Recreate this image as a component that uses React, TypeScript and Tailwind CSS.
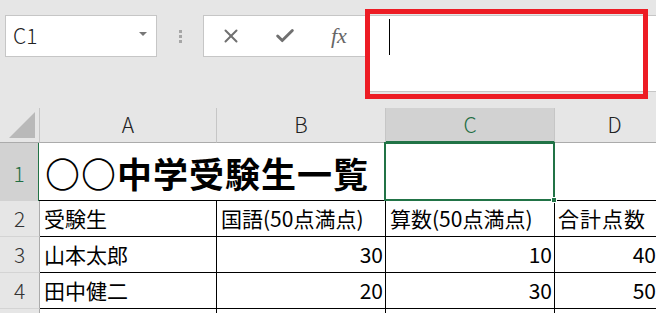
import { Check, X } from "lucide-react";

const jp = "font-['Noto_Sans_CJK_JP','Noto_Sans',sans-serif]";

const rows = [
  { n: "2", a: "受験生", b: "国語(50点満点)", c: "算数(50点満点)", d: "合計点数", num: false },
  { n: "3", a: "山本太郎", b: "30", c: "10", d: "40", num: true },
  { n: "4", a: "田中健二", b: "20", c: "30", d: "50", num: true },
  { n: "", a: "", b: "", c: "", d: "", num: true },
];

const ColHead = ({ label, active, w }: { label: string; active?: boolean; w: string }) => (
  <div
    className={`${w} shrink-0 h-full flex items-center justify-center border-r border-[#c6c6c6] text-[21px] font-light ${
      active ? "bg-[#d2d2d2] text-[#1f6e43] border-b-2 border-b-[#217346]" : "bg-[#e6e6e6] text-[#222] border-b border-b-[#ababab]"
    }`}
  >
    {label}
  </div>
);

export default function App() {
  return (
    <div className={`relative w-[656px] h-[313px] overflow-hidden bg-[#e6e6e6] ${jp}`}>
      {/* formula bar */}
      <div className="h-[108px] flex items-start pt-[15px] pl-[5px]">
        <div className="w-[152px] h-[42px] shrink-0 bg-white border border-[#c6c6c6] flex items-center justify-between pl-[7px] pr-[9px]">
          <span className="text-[21px] font-light text-[#222]">C1</span>
          <span className="w-0 h-0 border-x-[4px] border-x-transparent border-t-[4px] border-t-[#777] -mt-[4px]" />
        </div>
        <div className="w-[46px] h-[42px] shrink-0 flex flex-col items-center justify-center gap-[2px] pl-[1px]">
          <span className="w-[3px] h-[3px] bg-[#a6a6a6]" />
          <span className="w-[3px] h-[3px] bg-[#a6a6a6]" />
          <span className="w-[3px] h-[3px] bg-[#a6a6a6]" />
        </div>
        <div className="w-[164px] h-[42px] shrink-0 bg-white border border-[#c6c6c6] border-r-0 flex items-center pl-[16px] text-[#707070]">
          <X className="w-[22px] h-[22px]" strokeWidth={2.2} />
          <Check className="w-[22px] h-[22px] ml-[32px]" strokeWidth={3.2} />
          <span className="ml-[35px] font-['Liberation_Serif',serif] italic text-[22px] leading-none -mt-[1px] text-[#666]">fx</span>
        </div>
        <div className="flex-1 h-[77px] bg-white border-y border-[#c6c6c6] pl-[22px] pt-[3px]">
          <div className="w-[1px] h-[36px] bg-black" />
        </div>
      </div>
      {/* red highlight */}
      <div className="absolute left-[365px] top-[9px] w-[283px] h-[90px] border-[5px] border-[#ed1c24]" />

      {/* sheet */}
      <div className="flex h-[35px]">
        <div className="w-[40px] shrink-0 h-full relative bg-[#e6e6e6] border-r border-[#c6c6c6] border-b border-b-[#ababab]">
          <div className="absolute right-[4px] bottom-[4px] w-0 h-0 border-l-[26px] border-l-transparent border-b-[26px] border-b-[#b9b9b9]" />
        </div>
        <ColHead label="A" w="w-[177px]" />
        <ColHead label="B" w="w-[169px]" />
        <ColHead label="C" w="w-[169px]" active />
        <ColHead label="D" w="w-[120px]" />
      </div>

      {/* row 1 */}
      <div className="flex h-[58px]">
        <div className="w-[40px] shrink-0 bg-[#d2d2d2] border-r-2 border-[#217346] flex items-center justify-center text-[21px] font-light text-[#1f6e43] pt-[3px]">
          1
        </div>
        <div className="w-[346px] shrink-0 bg-white border-b border-black flex items-center pl-[6px] -ml-[1px] pt-[2px]">
          <span className="text-[35px] font-bold text-black leading-none whitespace-nowrap tracking-[1px]">
            <span className="font-extralight">〇〇</span>中学受験生一覧
          </span>
        </div>
        <div className="w-[169px] shrink-0 bg-white relative border-b border-black">
          <div className="absolute -left-[1px] -top-[1px] -right-[1px] -bottom-[1px] border-2 border-[#217346]" />
          <div className="absolute -right-[3px] -bottom-[3px] w-[6px] h-[6px] bg-[#217346] border border-white" />
        </div>
        <div className="w-[120px] shrink-0 bg-white border-b border-black" />
      </div>

      {rows.map((r, k) => (
        <div key={k} className="flex h-[36px]">
          <div className="w-[40px] shrink-0 bg-[#e6e6e6] border-r border-[#ababab] border-b border-b-[#d4d4d4] flex items-center justify-center text-[21px] font-light text-[#333]">
            {r.n}
          </div>
          <div className="w-[177px] shrink-0 bg-white border-r border-b border-black flex items-center pl-[4px] text-[21px] text-black whitespace-nowrap overflow-hidden">
            {r.a}
          </div>
          {[r.b, r.c].map((v, i) => (
            <div
              key={i}
              className={`w-[169px] shrink-0 bg-white border-r border-b border-black flex items-center text-[21px] text-black whitespace-nowrap overflow-hidden ${
                r.num ? "justify-end pr-[2px]" : "pl-[4px]"
              }`}
            >
              {v}
            </div>
          ))}
          <div
            className={`w-[120px] shrink-0 bg-white border-b border-black flex items-center text-[21px] text-black whitespace-nowrap overflow-hidden ${
              r.num ? "justify-end pr-[19px]" : "pl-[3px] tracking-[1px]"
            }`}
          >
            {r.d}
          </div>
        </div>
      ))}
    </div>
  );
}
